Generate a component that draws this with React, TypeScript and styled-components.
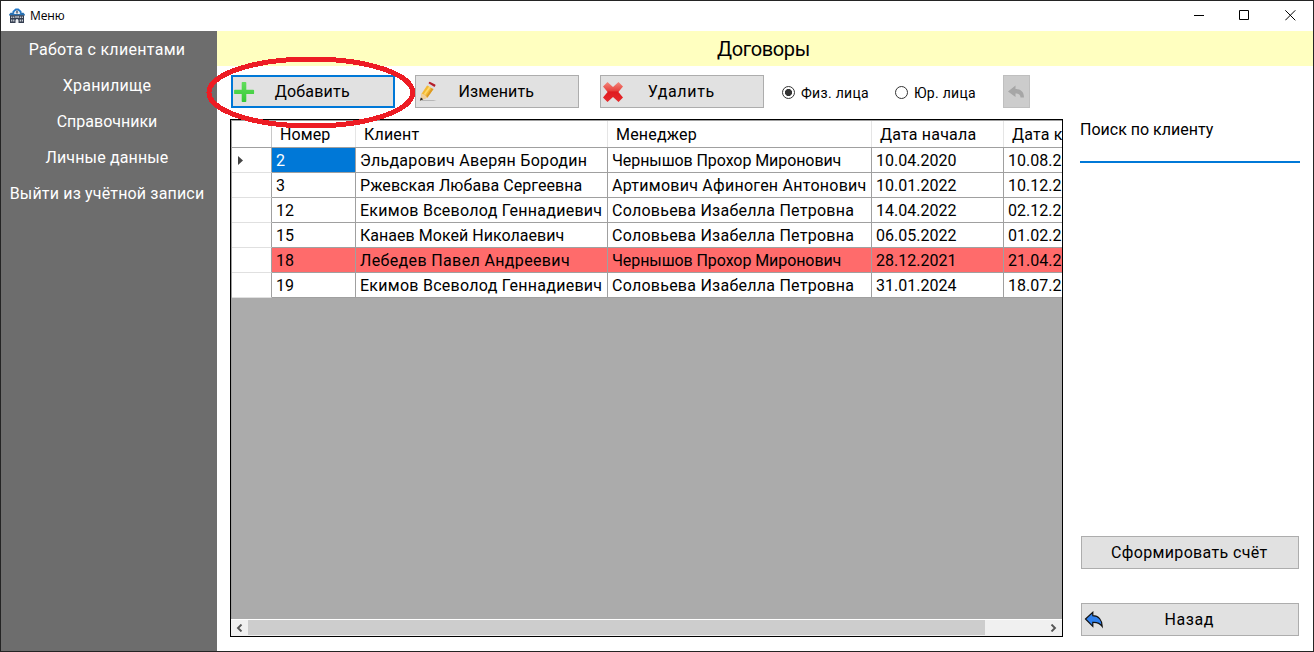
import React from "react";
import styled, { createGlobalStyle, css } from "styled-components";

const GlobalStyle = createGlobalStyle`
  * { box-sizing: border-box; }
  body { margin: 0; background: #fff; overflow: hidden; }
  button { font: inherit; color: inherit; cursor: pointer; }
`;

const Window = styled.div`
  position: relative;
  width: 1314px;
  height: 652px;
  display: flex;
  flex-direction: column;
  border: 1px solid #242424;
  background: #fff;
  color: #000;
  font: 16px/20px Roboto, "Liberation Sans", sans-serif;
  overflow: hidden;
`;

const TitleBar = styled.header`
  flex: 0 0 30px;
  display: flex;
  align-items: center;
  padding-left: 8px;
`;

const TitleText = styled.span`
  flex: 1;
  padding-left: 5px;
  font: 12px/16px "Open Sans", "Noto Sans", sans-serif;
  letter-spacing: -0.15px;
`;

const WindowButton = styled.button`
  width: 46px;
  height: 30px;
  padding: 0 0 2px;
  border: 0;
  background: none;
  display: flex;
  align-items: center;
  justify-content: center;
`;

const Body = styled.div`
  flex: 1;
  min-height: 0;
  display: flex;
`;

const Sidebar = styled.nav`
  flex: 0 0 216px;
  background: #6d6d6d;
  color: #fff;
`;

const MenuItem = styled.div<{ $spacing?: number }>`
  height: 36px;
  padding-right: 4px;
  line-height: 37px;
  text-align: center;
  white-space: nowrap;
  letter-spacing: ${(p) => p.$spacing ?? 0}px;
`;

const Main = styled.main`
  flex: 1;
  min-width: 0;
  display: flex;
  flex-direction: column;
`;

const Heading = styled.h1`
  flex: 0 0 35px;
  margin: 0;
  padding: 1px 3px 0 0;
  background: #ffffc0;
  font-size: 20px;
  font-weight: 400;
  line-height: 34px;
  letter-spacing: -0.35px;
  text-align: center;
`;

const Content = styled.div`
  flex: 1;
  min-height: 0;
  display: flex;
  padding: 9px 13px 14px 13px;
`;

const LeftPane = styled.section`
  flex: 0 0 833px;
  min-width: 0;
  display: flex;
  flex-direction: column;
`;

const RightPane = styled.aside`
  flex: 0 0 220px;
  margin-left: 17px;
  display: flex;
  flex-direction: column;
`;

const Toolbar = styled.div`
  height: 33px;
  margin: 0 0 11px 1px;
  display: flex;
  align-items: center;
`;

const Button = styled.button<{ $focused?: boolean; $width: number; $gap?: number }>`
  flex: none;
  display: grid;
  grid-template-columns: 26px 1fr 26px;
  align-items: center;
  width: ${(p) => p.$width}px;
  height: 33px;
  margin: 0 ${(p) => p.$gap ?? 0}px 0 0;
  padding: 0;
  border: 1px solid #adadad;
  background: #e1e1e1;
  text-align: center;
  white-space: nowrap;
  ${(p) =>
    p.$focused &&
    css`
      border: 2px solid #0078d7;
      grid-template-columns: 25px 1fr 25px;
    `}
  svg { display: block; }
`;

const ButtonLabel = styled.span<{ $spacing?: number }>`
  grid-column: 2;
  padding-right: 1.5px;
  letter-spacing: ${(p) => p.$spacing ?? 0}px;
`;

const RadioLabel = styled.label<{ $gap: number }>`
  display: flex;
  align-items: center;
  gap: 6px;
  margin-left: ${(p) => p.$gap}px;
  padding-top: 2px;
  font-size: 14px;
  letter-spacing: 0.3px;
  white-space: nowrap;
`;

const RadioMark = styled.span<{ $checked?: boolean }>`
  width: 13px;
  height: 13px;
  border: 1px solid #333;
  border-radius: 50%;
  background: ${(p) => (p.$checked ? "radial-gradient(circle, #333 3.2px, #fff 3.9px)" : "#fff")};
`;

const UndoButton = styled.button`
  width: 27px;
  height: 33px;
  margin-left: auto;
  margin-right: 33px;
  padding: 0;
  border: 1px solid #bfbfbf;
  background: #ccc;
  display: flex;
  align-items: center;
  justify-content: center;
`;

const GridBox = styled.div`
  flex: 1;
  min-height: 0;
  display: flex;
  flex-direction: column;
  border: 1px solid #000;
  background: #ababab;
  overflow: hidden;
`;

const Rows = styled.div`
  flex: 1;
  min-height: 0;
  overflow: hidden;
  border-left: 1px solid #a0a0a0;
  border-top: 1px solid #a0a0a0;
`;

const columns = "40px 84px 252px 264px 132px 58px";

const HeaderRow = styled.div`
  display: grid;
  grid-template-columns: ${columns};
  height: 27px;
  background: #fff;
  border-bottom: 1px solid #a0a0a0;
`;

const HeaderCell = styled.div<{ $spacing?: number }>`
  border-right: 1px solid #e5e5e5;
  padding-left: 8px;
  line-height: 27px;
  white-space: nowrap;
  overflow: hidden;
  letter-spacing: ${(p) => p.$spacing ?? 0}px;
  &:first-child { border-right-color: #c8c8c8; }
  &:last-child { border-right: 0; }
`;

const Row = styled.div<{ $overdue?: boolean }>`
  display: grid;
  grid-template-columns: ${columns};
  height: 25px;
  background: ${(p) => (p.$overdue ? "#ff6b6b" : "#fff")};
`;

const RowHead = styled.div`
  display: flex;
  align-items: center;
  padding-left: 6px;
  background: #fff;
  border-right: 1px solid #a0a0a0;
  border-bottom: 1px solid #e0e0e0;
`;

const Cell = styled.div<{ $selected?: boolean; $spacing?: number }>`
  border-right: 1px solid #a0a0a0;
  border-bottom: 1px solid #a0a0a0;
  padding-left: 4px;
  line-height: 25px;
  white-space: nowrap;
  overflow: hidden;
  letter-spacing: ${(p) => p.$spacing ?? 0}px;
  &:last-child { border-right: 0; }
  ${(p) => p.$selected && css`background: #0078d7; color: #fff;`}
`;

const ScrollBar = styled.div`
  flex: 0 0 17px;
  display: flex;
  background: #f0f0f0;
  border-top: 1px solid #fff;
`;

const ScrollArrow = styled.div`
  width: 17px;
  display: flex;
  align-items: center;
  justify-content: center;
`;

const ScrollThumb = styled.div`
  width: 737px;
  margin-right: auto;
  height: 15px;
  background: #cdcdcd;
`;

const SearchLabel = styled.label`
  margin-top: 45px;
  line-height: 20px;
`;

const SearchInput = styled.input`
  width: 220px;
  height: 23px;
  padding: 0;
  border: 0;
  border-bottom: 2px solid #0078d7;
  outline: 0;
  background: #fff;
  font: inherit;
`;

const Actions = styled.div`
  margin: auto 0 1px 1px;
  display: flex;
  flex-direction: column;
  gap: 34px;
`;

const Highlight = styled.svg`
  position: absolute;
  left: 204px;
  top: 54px;
  pointer-events: none;
`;

const BankIcon = () => (
  <svg width="16" height="16" viewBox="0 0 16 16">
    <path d="M3.500 5.500V3.200L6.500.5h3l3 2.700v2.300h-2V4L8.800 2.500H7.200L5.500 4v1.500z" fill="#2378c8" />
    <path d="M5.500 5.500V4l1.700-1.500h1.600L10.500 4v1.500z" fill="#dfe6ee" />
    <path d="M7.400 2.500h1.200v3H7.400z" fill="#2b3648" />
    <path d="M0 6.800 1.500 4.800h3L5 6h6l.5-1.200h3L16 6.800V7.500H0z" fill="#286fb0" />
    <path d="M1 7.200h14V15H1z" fill="#343e50" />
    <path d="M2.300 8.500h1v1.500h-1zm2 0h1v1.500h-1zm-2 3h1v2h-1zm2 0h1v2h-1zM10.800 8.500h1v1.500h-1zm2 0h1v1.500h-1zm-2 3h1v2h-1zm2 0h1v2h-1zM6.500 8h.7v2h-.7zm1.200 0h.7v2h-.7zm1.200 0h.7v2h-.7zM6.500 15v-2.500a1.500 1.500 0 0 1 3 0V15z" fill="#f0f2f5" />
  </svg>
);

const PlusIcon = () => (
  <svg width="22" height="22" viewBox="0 0 22 22">
    <defs>
      <linearGradient id="plus" x1="0" y1="0" x2="0" y2="1">
        <stop offset="0" stopColor="#62dd5c" />
        <stop offset="1" stopColor="#35c936" />
      </linearGradient>
    </defs>
    <path d="M9.500 1h3q.8 0 .8.800V8.700h6.900q.9 0 .9.900v2.600q0 .9-.9.900h-6.900v7.100q0 .8-.8.800h-3q-.8 0-.8-.8v-7.100H1.900q-.8 0-.8-.9V9.600q0-.9.800-.9h6.800V1.800q0-.8.800-.8z" fill="url(#plus)" />
  </svg>
);

const PencilIcon = () => (
  <svg width="24" height="22" viewBox="-2 0 24 22">
    <path d="M4 19.200h14.500l-3 .9H3z" fill="#a9a9a9" />
    <path d="M3.700 12.500 9.200 4.200 15.500 8 9.500 16.500 2.500 19.200z" fill="#f3b935" />
    <path d="M6.500 13.500 12 5.700" stroke="#ffd968" strokeWidth="1.800" />
    <path d="m9.500 16.500 6-8.500-1.600-1-6 8.700z" fill="#dc9a24" />
    <path d="m3.700 12.500 2.800 1.300 3 2.700-7.200 2.900z" fill="#efcf9b" />
    <path d="m2.900 16.600 2.300 1.700-3.400 1.500z" fill="#222" />
    <path d="m9.200 4.200 1.300-1.900 6.300 3.800L15.500 8z" fill="#dcdcdc" />
    <path d="m10.500 2.300.7-1.200q.4-.4 1-.2l5 2.600q.5.500.2 1.100l-.9 1.500z" fill="#b51f2b" />
  </svg>
);

const CrossIcon = () => (
  <svg width="23" height="22" viewBox="-1 0 23 22">
    <defs>
      <linearGradient id="cross" x1="0" y1="0" x2="0" y2="1">
        <stop offset="0" stopColor="#f2897d" />
        <stop offset=".42" stopColor="#e84540" />
        <stop offset=".5" stopColor="#df1c20" />
        <stop offset="1" stopColor="#e62a2d" />
      </linearGradient>
    </defs>
    <path d="M5.500 1 11 6 16.500 1l4.500 4.500-4.600 5.500 4.600 5.500-4.500 4.500-5.500-5L5.500 21 1 16.500 5.600 11 1 5.500z" fill="url(#cross)" />
  </svg>
);

const BackIcon = () => (
  <svg width="22" height="18" viewBox="-2.500 0 22 18">
    <path d="M1 8 8.300 1.300v3.400c5.700.1 9.200 4.300 9.400 10.800-2.300-3.400-5-4.400-9.400-4.100v4z" fill="#2f80ed" stroke="#111" strokeWidth="1.200" strokeLinejoin="miter" />
  </svg>
);

const UndoIcon = () => (
  <svg width="17" height="14" viewBox="0 0 17 14">
    <path d="M0 6.500 7.500.5V4C12.500 4 16 6.500 16 12.500h-3.500c0-3-2-4-5-4V12z" fill="#a6a6a6" />
  </svg>
);

const menu: [string, number][] = [
  ["Работа с клиентами", 0.3],
  ["Хранилище", 0.2],
  ["Справочники", 0],
  ["Личные данные", 0.15],
  ["Выйти из учётной записи", 0.17],
];

const headers: [string, number][] = [
  ["Номер", 0.1],
  ["Клиент", 0.2],
  ["Менеджер", 0.2],
  ["Дата начала", 0.2],
  ["Дата конца", 0.2],
];

const contracts = [
  ["2", "Эльдарович Аверян Бородин", "Чернышов Прохор Миронович", "10.04.2020", "10.08.2020"],
  ["3", "Ржевская Любава Сергеевна", "Артимович Афиноген Антонович", "10.01.2022", "10.12.2022"],
  ["12", "Екимов Всеволод Геннадиевич", "Соловьева Изабелла Петровна", "14.04.2022", "02.12.2022"],
  ["15", "Канаев Мокей Николаевич", "Соловьева Изабелла Петровна", "06.05.2022", "01.02.2023"],
  ["18", "Лебедев Павел Андреевич", "Чернышов Прохор Миронович", "28.12.2021", "21.04.2022"],
  ["19", "Екимов Всеволод Геннадиевич", "Соловьева Изабелла Петровна", "31.01.2024", "18.07.2024"],
];

const tracking: Record<string, number> = {
  "Эльдарович Аверян Бородин": 0.29,
  "Ржевская Любава Сергеевна": 0.07,
  "Екимов Всеволод Геннадиевич": 0.27,
  "Канаев Мокей Николаевич": 0.03,
  "Лебедев Павел Андреевич": 0.36,
  "Чернышов Прохор Миронович": -0.08,
  "Артимович Афиноген Антонович": 0.26,
  "Соловьева Изабелла Петровна": 0.25,
};

export default function App() {
  return (
    <>
      <GlobalStyle />
      <Window>
        <TitleBar>
          <BankIcon />
          <TitleText>Меню</TitleText>
          <WindowButton aria-label="Свернуть">
            <svg width="11" height="11" viewBox="-1 0 11 11"><path d="M0 5.500h10" stroke="#000" /></svg>
          </WindowButton>
          <WindowButton aria-label="Развернуть">
            <svg width="11" height="11"><path d="M.5 .5h9v9h-9z" fill="none" stroke="#000" /></svg>
          </WindowButton>
          <WindowButton aria-label="Закрыть">
            <svg width="11" height="11"><path d="m.3.3 10 10m0-10-10 10" stroke="#000" /></svg>
          </WindowButton>
        </TitleBar>
        <Body>
          <Sidebar>
            {menu.map(([label, spacing]) => (
              <MenuItem key={label} $spacing={spacing}>{label}</MenuItem>
            ))}
          </Sidebar>
          <Main>
            <Heading>Договоры</Heading>
            <Content>
              <LeftPane>
                <Toolbar>
                  <Button $width={164} $gap={20} $focused><PlusIcon /><ButtonLabel $spacing={0.2}>Добавить</ButtonLabel></Button>
                  <Button $width={164} $gap={21}><PencilIcon /><ButtonLabel $spacing={0.1}>Изменить</ButtonLabel></Button>
                  <Button $width={164}><CrossIcon /><ButtonLabel $spacing={0.65}>Удалить</ButtonLabel></Button>
                  <RadioLabel $gap={18}><RadioMark $checked />Физ. лица</RadioLabel>
                  <RadioLabel $gap={26}><RadioMark />Юр. лица</RadioLabel>
                  <UndoButton aria-label="Отменить"><UndoIcon /></UndoButton>
                </Toolbar>
                <GridBox>
                  <Rows>
                    <HeaderRow>
                      <HeaderCell />
                      {headers.map(([title, spacing]) => (
                        <HeaderCell key={title} $spacing={spacing}>{title}</HeaderCell>
                      ))}
                    </HeaderRow>
                    {contracts.map((row, r) => (
                      <Row key={row[0]} $overdue={row[0] === "18"}>
                        <RowHead>
                          {r === 0 && <svg width="6" height="9"><path d="M0 0 5 4.500 0 9z" fill="#444" /></svg>}
                        </RowHead>
                        {row.map((value, c) => (
                          <Cell key={c} $selected={r === 0 && c === 0} $spacing={tracking[value]}>{value}</Cell>
                        ))}
                      </Row>
                    ))}
                  </Rows>
                  <ScrollBar>
                    <ScrollArrow><svg width="7" height="8"><path d="M5.500 .5 2 4l3.500 3.500" fill="none" stroke="#555" strokeWidth="1.900" /></svg></ScrollArrow>
                    <ScrollThumb />
                    <ScrollArrow><svg width="7" height="8"><path d="M1.500 .5 5 4 1.500 7.500" fill="none" stroke="#555" strokeWidth="1.900" /></svg></ScrollArrow>
                  </ScrollBar>
                </GridBox>
              </LeftPane>
              <RightPane>
                <SearchLabel htmlFor="search">Поиск по клиенту</SearchLabel>
                <SearchInput id="search" />
                <Actions>
                  <Button $width={218}><ButtonLabel $spacing={0.35}>Сформировать счёт</ButtonLabel></Button>
                  <Button $width={218}><BackIcon /><ButtonLabel $spacing={0.6}>Назад</ButtonLabel></Button>
                </Actions>
              </RightPane>
            </Content>
          </Main>
        </Body>
        <Highlight width="212" height="76" viewBox="205 55 212 76">
          <ellipse cx="310.800" cy="92.500" rx="101.800" ry="33.500" fill="none" stroke="#ed1c24" strokeWidth="5" shapeRendering="crispEdges" />
        </Highlight>
      </Window>
    </>
  );
}
